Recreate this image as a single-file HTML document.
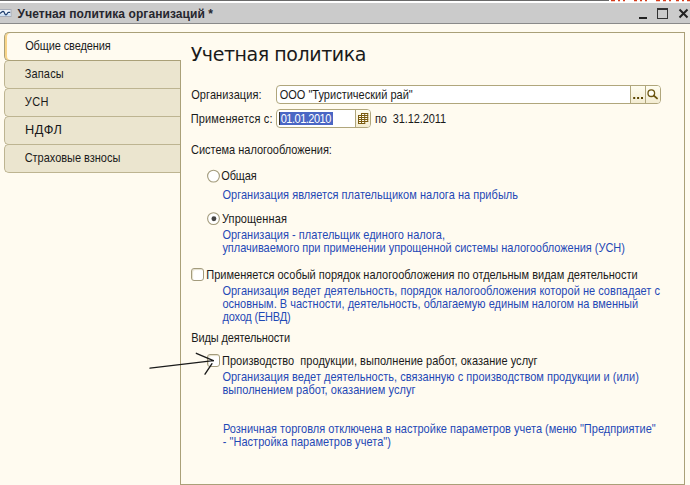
<!DOCTYPE html>
<html lang="ru">
<head>
<meta charset="utf-8">
<title>Учетная политика организаций</title>
<style>
html,body{margin:0;padding:0;}
body{width:690px;height:485px;overflow:hidden;background:#fffbf0;font-family:"Liberation Sans",Arial,sans-serif;font-size:11px;line-height:13px;color:#1a1a1a;position:relative;}
.abs{position:absolute;white-space:nowrap;}
h1{margin:0;font-weight:normal;}
#topstrip{left:0;top:0;width:690px;height:3px;background:#fff;}
#topdark{left:0;top:0;width:609px;height:1px;background:#6a6a6a;}
#titlebar{left:0;top:3px;width:690px;height:20px;background:#cbcbcb;border-bottom:1px solid #8a8a8a;}
#panel{left:180px;top:32px;width:503px;height:451px;border:1px solid #aaa078;background:#fffbf0;box-sizing:content-box;}
.tab{left:4px;width:175px;height:27px;background:#ebe5cf;border:1px solid #bdb491;border-right:none;border-radius:5px 0 0 5px;box-sizing:content-box;}
#tab0{top:32px;width:176px;height:27px;background:#fffbf0;border-color:#aaa078;z-index:1;box-shadow:inset 2px 0 0 #f8d488;}
.tx{z-index:2;transform:scaleY(1.09);transform-origin:0 0;}
#title,#h{transform:none;}
.input{background:#fff;border:1px solid #b0a67c;border-radius:4px;box-sizing:border-box;overflow:hidden;}
.btn{position:absolute;top:0;bottom:0;border-left:1px solid #b0a67c;background:linear-gradient(#fffdf0,#f3ecd2);}
.cb{width:11px;height:11px;border:1px solid #a39b7c;border-radius:3px;background:#fff;box-sizing:content-box;box-shadow:inset 1px 1px 1px #e4dfcc;}
</style>
</head>
<body>
<div class="abs" id="topstrip"></div>
<div class="abs" id="topdark"></div>
<div class="abs" id="titlebar"></div>
<svg class="abs" style="left:0;top:8px" width="14" height="10" viewBox="0 0 14 10"><rect x="-1" y="1.5" width="12" height="7" fill="#eef4fb" stroke="#a8adb8"/><rect x="0" y="6" width="10.5" height="2" fill="#cfe2f5"/><path d="M-0.5 5.4 C1.2 5.4 1.8 3.3 3.1 3.4 C4.7 3.6 4.5 6.8 6 6.8 C7.3 6.8 7.2 4.5 8.4 4.4 L10.2 4.3" fill="none" stroke="#1f3f70" stroke-width="1.3"/></svg>
<svg class="abs" style="left:630px;top:5px" width="60" height="18" viewBox="0 0 60 18">
<rect x="9" y="12" width="8" height="2" fill="#222"/>
<rect x="27.5" y="4" width="10" height="9.5" fill="none" stroke="#333" stroke-width="1"/>
<rect x="27" y="3" width="11" height="2" fill="#333"/>
<path d="M49.5 4.5 L57.5 12.5 M57.5 4.5 L49.5 12.5" stroke="#222" stroke-width="2" fill="none"/>
</svg>
<svg class="abs" style="left:609px;top:0" width="81" height="2" viewBox="0 0 81 2"><path d="M2 0.5 H6 M9 0.5 H11 M14 0.5 H16 M25 0.5 H28 M31 0.5 H33 M36 0.5 H38 M47 0.5 H51 M54 0.5 H57 M60 0.5 H62 M67 0.5 H70 M73 0.5 H75 M78 0.5 H81" stroke="#d43a1a" stroke-width="1.4"/></svg>

<div class="abs" id="panel"></div>
<div class="abs tab" id="tab0"></div>
<div class="abs tab" style="top:60px"></div>
<div class="abs tab" style="top:88px"></div>
<div class="abs tab" style="top:116px"></div>
<div class="abs tab" style="top:144px"></div>

<div class="abs input" style="left:276px;top:85px;width:385px;height:19px;">
 <div class="btn" style="left:353px;width:14px;"></div>
 <div class="btn" style="left:368px;width:16px;"></div>
</div>
<svg class="abs" style="left:631px;top:86px" width="30" height="17" viewBox="0 0 30 17">
 <rect x="2.2" y="11" width="2" height="2" fill="#5a4500"/><rect x="6.1" y="11" width="2" height="2" fill="#5a4500"/><rect x="10" y="11" width="2" height="2" fill="#5a4500"/>
 <circle cx="20.3" cy="7.2" r="3.3" fill="#fffef6" stroke="#6b5510" stroke-width="1.3"/><path d="M22.8 9.6 L26 12.4" stroke="#6b5510" stroke-width="1.9" stroke-linecap="round"/>
</svg>

<div class="abs input" style="left:276px;top:109px;width:95px;height:19px;">
 <div class="btn" style="left:78px;width:16px;"></div>
</div>
<div class="abs" style="left:279px;top:112px;width:54px;height:13px;background:#4a66c4;"></div>
<div class="abs" style="left:279px;top:112px;width:1px;height:13px;background:#3a3020;"></div>
<svg class="abs" style="left:357px;top:112px" width="13" height="14" viewBox="0 0 13 14">
 <path d="M4.5 1.5 H10.7 V9.5 H7.7 V11.5 H1.5 V3.5 H4.5 Z" fill="#fffdf0" stroke="none"/>
 <path d="M4.5 1.5 H10.7 M1.5 3.5 H10.7 M1.5 5.5 H10.7 M1.5 7.5 H10.7 M1.5 9.5 H10.7 M1.5 11.5 H7.7 M1.5 3.5 V11.5 M4.5 1.5 V11.5 M7.7 1.5 V11.5 M10.7 1.5 V9.5" stroke="#7a5a10" stroke-width="1" fill="none" stroke-linecap="square"/>
</svg>

<svg class="abs" style="left:200px;top:165px" width="30" height="65" viewBox="0 0 30 65">
 <circle cx="13.5" cy="11.1" r="5.9" fill="#fff" stroke="#a39b7c" stroke-width="1.1"/>
 <circle cx="13.5" cy="53.6" r="5.9" fill="#fff" stroke="#a39b7c" stroke-width="1.1"/>
 <circle cx="13.9" cy="53.8" r="2.45" fill="#444"/>
</svg>
<div class="abs cb" style="left:191px;top:268px"></div>
<div class="abs cb" style="left:207px;top:354px"></div>

<div class="abs tx" id="title" style="left:17.60px;top:8px;letter-spacing:0.076px;font-weight:bold;font-size:12px;color:#26262e;">Учетная политика организаций *</div>
<h1 class="abs tx" id="h" style="left:190.70px;top:42px;letter-spacing:-0.427px;font-family:'DejaVu Sans','Liberation Sans',sans-serif;font-size:19px;line-height:24px;color:#1a1a1a;">Учетная политика</h1>
<div class="abs tx" id="t0" style="left:25.20px;top:38.7px;letter-spacing:-0.120px;">Общие сведения</div>
<div class="abs tx" id="t1" style="left:24.68px;top:66.7px;letter-spacing:0.160px;">Запасы</div>
<div class="abs tx" id="t2" style="left:24.68px;top:94.7px;letter-spacing:0.470px;">УСН</div>
<div class="abs tx" id="t3" style="left:24.60px;top:122.7px;letter-spacing:0.500px;transform:scale(1.16,1.09);">НДФЛ</div>
<div class="abs tx" id="t4" style="left:24.68px;top:150.7px;letter-spacing:-0.021px;">Страховые взносы</div>
<div class="abs tx" id="l1" style="left:191.20px;top:88.2px;letter-spacing:0.091px;">Организация:</div>
<div class="abs tx" id="v1" style="left:279.70px;top:88.2px;letter-spacing:0.009px;">ООО "Туристический рай"</div>
<div class="abs tx" id="l2" style="left:190.70px;top:112.2px;letter-spacing:0.169px;">Применяется с:</div>
<div class="abs tx" id="v2" style="left:280.70px;top:112.2px;letter-spacing:-0.489px;color:#fff;">01.01.2010</div>
<div class="abs tx" id="po" style="left:375.00px;top:112.2px;letter-spacing:-0.300px;">по</div>
<div class="abs tx" id="d2" style="left:392.70px;top:112.2px;letter-spacing:-0.089px;">31.12.2011</div>
<div class="abs tx" id="s1" style="left:191.00px;top:143.2px;letter-spacing:-0.017px;">Система налогообложения:</div>
<div class="abs tx" id="r1" style="left:221.30px;top:169.2px;letter-spacing:-0.150px;">Общая</div>
<div class="abs tx" id="b1" style="left:222.40px;top:188.2px;letter-spacing:0.031px;color:#1f49b6;">Организация является плательщиком налога на прибыль</div>
<div class="abs tx" id="r2" style="left:222.00px;top:212.2px;letter-spacing:0.100px;">Упрощенная</div>
<div class="abs tx" id="b2" style="left:222.40px;top:228.2px;letter-spacing:0.025px;color:#1f49b6;">Организация - плательщик единого налога,</div>
<div class="abs tx" id="b3" style="left:222.40px;top:241.2px;letter-spacing:-0.022px;color:#1f49b6;">уплачиваемого при применении упрощенной системы налогообложения (УСН)</div>
<div class="abs tx" id="c1" style="left:206.30px;top:268.2px;letter-spacing:0.011px;">Применяется особый порядок налогообложения по отдельным видам деятельности</div>
<div class="abs tx" id="b4" style="left:222.40px;top:284.2px;letter-spacing:0.027px;color:#1f49b6;">Организация ведет деятельность, порядок налогообложения которой не совпадает с</div>
<div class="abs tx" id="b5" style="left:222.40px;top:297.2px;letter-spacing:0.008px;color:#1f49b6;">основным. В частности, деятельность, облагаемую единым налогом на вменный</div>
<div class="abs tx" id="b6" style="left:222.40px;top:310.2px;letter-spacing:-0.182px;color:#1f49b6;">доход (ЕНВД)</div>
<div class="abs tx" id="s2" style="left:191.30px;top:331.2px;letter-spacing:-0.137px;">Виды деятельности</div>
<div class="abs tx" id="c2" style="left:222.00px;top:354.2px;letter-spacing:0.035px;">Производство&nbsp; продукции, выполнение работ, оказание услуг</div>
<div class="abs tx" id="b7" style="left:222.40px;top:370.2px;letter-spacing:0.021px;color:#1f49b6;">Организация ведет деятельность, связанную с производством продукции и (или)</div>
<div class="abs tx" id="b8" style="left:222.40px;top:383.2px;letter-spacing:0.046px;color:#1f49b6;">выполнением работ, оказанием услуг</div>
<div class="abs tx" id="b9" style="left:222.90px;top:422.2px;letter-spacing:0.013px;color:#1f49b6;">Розничная торговля отключена в настройке параметров учета (меню "Предприятие"</div>
<div class="abs tx" id="b10" style="left:222.70px;top:435.2px;letter-spacing:0.033px;color:#1f49b6;">- "Настройка параметров учета")</div>
<svg class="abs" style="left:140px;top:345px;z-index:3" width="90" height="40" viewBox="0 0 90 40"><path d="M10 23.1 L73.4 15.7 M56.3 8.3 L73.4 15.7 M65 29.2 L72 18.7" stroke="#1a1a1a" stroke-width="1.35" fill="none" stroke-linecap="round"/></svg>
</body>
</html>
